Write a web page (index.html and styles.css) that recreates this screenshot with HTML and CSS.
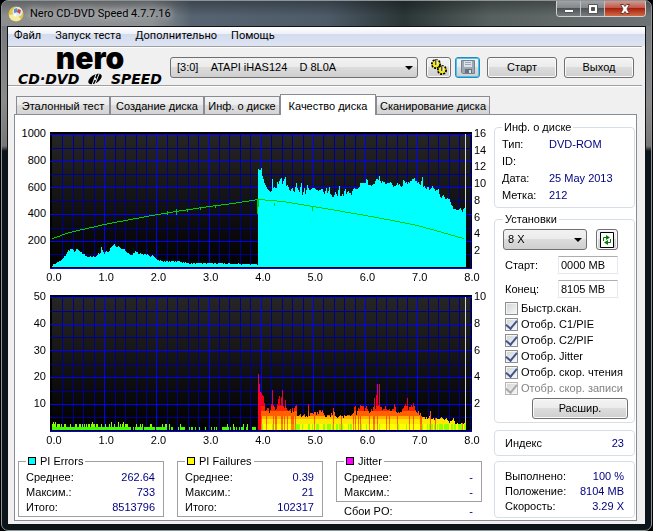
FILE: index.html
```html
<!DOCTYPE html>
<html lang="ru">

<head>
  <meta charset="UTF-8">
  <meta name="viewport" content="width=device-width, initial-scale=1.0">
  <title>Nero CD-DVD Speed 4.7.7.16</title>
  <link rel="stylesheet" href="styles.css">
</head>

<body>
  <div class="window">
    <header class="titlebar">
      <svg class="app-icon" width="16" height="16" viewBox="0 0 16 16">
        <circle cx="8" cy="8" r="7.5" fill="#e2c544" />
        <path d="M1 9a7 7 0 0 0 12 4L8 8z" fill="#f7ec9c" />
        <circle cx="9.5" cy="6" r="5" fill="#dfe8f2" />
        <path d="M6 3l3-1 1 4-4 1z" fill="#5a8fd0" />
        <path d="M10 3l3 1-1 4-3-2z" fill="#d84a30" />
        <circle cx="7" cy="9" r="1.6" fill="#fff" />
      </svg>
      <span class="title">Nero CD-DVD Speed 4.7.7.16</span>
      <div class="window-buttons">
        <button class="win-btn" aria-label="Свернуть">
          <svg width="12" height="10" viewBox="0 0 12 10"><path d="M1.5 5.5h9v3h-9z" fill="#fff" stroke="#555" /></svg>
        </button>
        <button class="win-btn" aria-label="Развернуть">
          <svg width="12" height="10" viewBox="0 0 12 10"><path d="M1.5.5h9v9h-9zM4.5 3.5v3h3v-3z" fill="#fff" fill-rule="evenodd" stroke="#555" /></svg>
        </button>
        <button class="win-btn close" aria-label="Закрыть">
          <svg width="12" height="10" viewBox="0 0 12 10"><path d="M1.5.5h3L6 2.5 7.5.5h3L8 5l2.5 4.500h-3L6 7.500 4.500 9.500h-3L4 5z" fill="#fff" stroke="#6b3a34" /></svg>
        </button>
      </div>
    </header>

    <div class="client">
      <nav class="menu">
        <a href="#file">Файл</a>
        <a href="#run">Запуск теста</a>
        <a href="#extra">Дополнительно</a>
        <a href="#help">Помощь</a>
      </nav>

      <div class="toolbar">
        <div class="logo">
          <span class="logo-nero">nero</span>
          <span class="logo-speed">
            <span>CD·DVD</span>
            <svg width="16" height="12" viewBox="0 0 16 12">
              <ellipse cx="8" cy="6" rx="7.5" ry="4" transform="rotate(-32 8 6)" fill="#000" />
              <path d="M9.5 0L5 12M12 1L8 11" stroke="#f0f0f0" stroke-width="1" />
              <circle cx="8" cy="6" r="1.2" fill="#f0f0f0" />
            </svg>
            <span>SPEED</span>
          </span>
        </div>
        <div class="select drive">
          <select aria-label="Привод">
            <option>[3:0] &nbsp; &nbsp;ATAPI iHAS124 &nbsp; &nbsp;D 8L0A</option>
          </select>
        </div>
        <button class="btn icon-btn" aria-label="Настройки">
          <svg width="18" height="18" viewBox="0 0 18 18">
            <circle cx="6" cy="6" r="4" fill="#f4ec00" stroke="#000" stroke-width="2" stroke-dasharray="2 1" />
            <circle cx="6" cy="6" r="3.2" fill="#f4ec00" />
            <circle cx="12" cy="12" r="4" fill="#f4ec00" stroke="#000" stroke-width="2" stroke-dasharray="2 1" />
            <circle cx="12" cy="12" r="3.2" fill="#f4ec00" />
            <path d="M6 1v6M12 8v5" stroke="#555" stroke-width="2" />
            <path d="M7 2v5M13 8v5" stroke="#fff" stroke-width="1" />
          </svg>
        </button>
        <button class="btn icon-btn save" aria-label="Сохранить">
          <svg width="14" height="14" viewBox="0 0 14 14">
            <path d="M.5.5h13v13h-12l-1-1z" fill="#9ba7b2" stroke="#74828f" />
            <path d="M3 1h8v6H3z" fill="#dbe1e6" />
            <path d="M4 2.5h6M4 4.5h6" stroke="#9ba7b2" />
            <path d="M4 9h7v4H4z" fill="#65717d" />
            <path d="M8 10h2v3H8z" fill="#dbe1e6" />
          </svg>
        </button>
        <button class="btn command">Старт</button>
        <button class="btn command">Выход</button>
      </div>

      <div class="tabs">
        <button class="tab tab-wide">Эталонный тест</button>
        <button class="tab tab-wide">Создание диска</button>
        <button class="tab tab-info">Инф. о диске</button>
        <button class="tab tab-quality active">Качество диска</button>
        <button class="tab tab-scan">Сканирование диска</button>
      </div>

      <main class="panel">
        <section class="results">
          <div class="chart">
            <div class="axis axis-left"><span>1000</span><span>800</span><span>600</span><span>400</span><span>200</span></div>
            <canvas id="pieChart"></canvas>
            <div class="axis axis-right speed"><span>16</span><span>14</span><span>12</span><span>10</span><span>8</span><span>6</span><span>4</span><span>2</span></div>
            <div class="axis-x"><span>0.0</span><span>1.0</span><span>2.0</span><span>3.0</span><span>4.0</span><span>5.0</span><span>6.0</span><span>7.0</span><span>8.0</span></div>
          </div>
          <div class="chart">
            <div class="axis axis-left"><span>50</span><span>40</span><span>30</span><span>20</span><span>10</span></div>
            <canvas id="pifChart"></canvas>
            <div class="axis axis-right"><span>10</span><span>8</span><span>6</span><span>4</span><span>2</span></div>
            <div class="axis-x"><span>0.0</span><span>1.0</span><span>2.0</span><span>3.0</span><span>4.0</span><span>5.0</span><span>6.0</span><span>7.0</span><span>8.0</span></div>
          </div>

          <div class="stats">
            <fieldset class="stat">
              <legend><i class="swatch cyan"></i>PI Errors</legend>
              <div class="row"><span>Среднее:</span><b>262.64</b></div>
              <div class="row"><span>Максим.:</span><b>733</b></div>
              <div class="row"><span>Итого:</span><b>8513796</b></div>
            </fieldset>
            <fieldset class="stat">
              <legend><i class="swatch yellow"></i>PI Failures</legend>
              <div class="row"><span>Среднее:</span><b>0.39</b></div>
              <div class="row"><span>Максим.:</span><b>21</b></div>
              <div class="row"><span>Итого:</span><b>102317</b></div>
            </fieldset>
            <div class="jitter">
              <fieldset class="stat">
                <legend><i class="swatch magenta"></i>Jitter</legend>
                <div class="row"><span>Среднее:</span><b>-</b></div>
                <div class="row"><span>Максим.:</span><b>-</b></div>
              </fieldset>
              <div class="row po"><span>Сбои PO:</span><b>-</b></div>
            </div>
          </div>
        </section>

        <aside class="sidebar">
          <fieldset class="group disc-info">
            <legend>Инф. о диске</legend>
            <dl>
              <dt>Тип:</dt><dd>DVD-ROM</dd>
              <dt>ID:</dt><dd></dd>
              <dt>Дата:</dt><dd>25 May 2013</dd>
              <dt>Метка:</dt><dd>212</dd>
            </dl>
          </fieldset>

          <fieldset class="group settings">
            <legend>Установки</legend>
            <div class="speed-row">
              <div class="select">
                <select aria-label="Скорость">
                  <option>8 X</option>
                </select>
              </div>
              <button class="btn refresh" aria-label="Обновить">
                <svg width="14" height="16" viewBox="0 0 14 16">
                  <path d="M.5.5h13v15H.5z" fill="#fff" stroke="#000" />
                  <path d="M3.5 9V5.500H6M10.500 7v3.500H8" fill="none" stroke="#087a08" />
                  <path d="M6 3l4 2.500L6 8zM8 8l-4 2.500L8 13z" fill="#087a08" />
                </svg>
              </button>
            </div>
            <div class="field">
              <label for="start">Старт:</label>
              <input id="start" type="text" value="0000 MB">
            </div>
            <div class="field">
              <label for="end">Конец:</label>
              <input id="end" type="text" value="8105 MB">
            </div>
            <div class="checks">
              <label><input type="checkbox">Быстр.скан.</label>
              <label><input type="checkbox" checked>Отобр. C1/PIE</label>
              <label><input type="checkbox" checked>Отобр. C2/PIF</label>
              <label><input type="checkbox" checked>Отобр. Jitter</label>
              <label><input type="checkbox" checked>Отобр. скор. чтения</label>
              <label class="disabled"><input type="checkbox" checked disabled>Отобр. скор. записи</label>
            </div>
            <button class="btn advanced">Расшир.</button>
          </fieldset>

          <div class="group index">
            <div class="row"><span>Индекс</span><b>23</b></div>
          </div>

          <div class="group progress">
            <div class="row"><span>Выполнено:</span><b>100 %</b></div>
            <div class="row"><span>Положение:</span><b>8104 MB</b></div>
            <div class="row"><span>Скорость:</span><b>3.29 X</b></div>
          </div>
        </aside>
      </main>
    </div>
  </div>
  <script src="charts.js"></script>
</body>

</html>
```

FILE: styles.css
```css
* {
  box-sizing: border-box;
}

body {
  margin: 0;
  padding: 0 1px 1px;
  background-color: #000;
  font-family: 'Liberation Sans', Arial, sans-serif;
  font-size: 11px;
  line-height: 15px;
  color: #000;
}

button,
input,
select {
  font: inherit;
  color: inherit;
}

.window {
  padding: 0 5px 5px;
  border: 1px solid #8d9498;
  border-radius: 7px;
  background: linear-gradient(#70757a 0, #8b8b8b 100px, #777 145px, #0c1519 150px, #0c1519 100%);
}

/* title bar */
.titlebar {
  display: flex;
  align-items: center;
  height: 25px;
  margin: 0 -5px;
  padding: 0 5px 0 6px;
  border-radius: 6px 6px 0 0;
  background: linear-gradient(rgba(0, 0, 0, 0.3), rgba(0, 0, 0, 0) 60%),
    linear-gradient(90deg, #8b8d8f 0, #8d9194 150px, #566370 190px, #4d5b68 50%, #2b3637 62%, #56605e 75%, #6d7275 100%);
}

.title {
  flex: 1;
  margin-left: 6px;
  font-family: Roboto, sans-serif;
  text-shadow: 0 0 6px #ccc, 0 0 8px #ccc;
}

.window-buttons {
  display: flex;
  align-self: flex-start;
  border: 1px solid #d0d0d0;
  border-top: none;
  border-radius: 0 0 4px 4px;
  overflow: hidden;
}

.win-btn {
  display: flex;
  align-items: center;
  justify-content: center;
  width: 24px;
  height: 15px;
  padding: 0;
  border: none;
  border-right: 1px solid #c0c0c0;
  background: linear-gradient(#a0a2a4, #84888b 45%, #4c5256 50%, #777c80);
}

.win-btn.close {
  width: 40px;
  border-right: none;
  background: linear-gradient(#d09a90, #c0584a 45%, #a8200c 50%, #d06a45);
}

/* client area */
.client {
  border: 1px solid #111;
  background-color: #f0f0f0;
  padding-bottom: 3px;
}

.menu {
  display: flex;
  gap: 14px;
  height: 19px;
  padding-left: 6px;
  line-height: 18px;
  font-family: Roboto, sans-serif;
  background: linear-gradient(#fff, #eef1f9 35%, #d4dbed 36%, #dde4f3);
}

.menu a {
  color: #000;
  text-decoration: none;
}

.toolbar {
  display: flex;
  align-items: center;
  height: 40px;
  margin-right: 3px;
  padding: 2px 8px 0 10px;
  border-top: 1px solid #a0a0a0;
  border-bottom: 1px solid #a0a0a0;
  box-shadow: inset 0 1px #fff, 0 1px #fff;
}

.logo {
  display: flex;
  flex-direction: column;
  align-items: center;
  width: 144px;
  margin-right: 8px;
}

.logo-nero {
  font-family: Inter, sans-serif;
  font-size: 30px;
  font-weight: 900;
  line-height: 18px;
}

.logo-speed {
  display: flex;
  align-items: center;
  justify-content: space-between;
  width: 100%;
  margin-top: 6px;
  font-family: 'DejaVu Sans', sans-serif;
  font-size: 14px;
  font-style: italic;
  font-weight: bold;
  line-height: 12px;
}

.btn {
  height: 21px;
  padding: 0;
  border: 1px solid #707070;
  border-radius: 3px;
  background: linear-gradient(#f4f4f4, #ebebeb 49%, #dcdcdc 50%, #cfcfcf);
  box-shadow: inset 0 0 0 1px #fafafa;
}

.icon-btn {
  display: flex;
  align-items: center;
  justify-content: center;
  width: 25px;
  margin-left: 8px;
}

.icon-btn.save {
  margin-left: 4px;
  border-color: #2c8ab5;
  box-shadow: inset 0 0 0 1px #3fc4f5;
}

.command {
  width: 70px;
  margin-left: 7px;
}

.select {
  position: relative;
}

.select select {
  display: block;
  width: 100%;
  height: 21px;
  padding: 0 20px 0 6px;
  appearance: none;
  border: 1px solid #707070;
  border-radius: 3px;
  background: linear-gradient(#f2f2f2, #ebebeb 49%, #dcdcdc 50%, #cfcfcf);
}

.select::after {
  content: '';
  position: absolute;
  top: 9px;
  right: 5px;
  border: 4px solid transparent;
  border-top-color: #000;
  border-bottom: none;
}

.drive {
  flex: 1;
}

/* tabs */
.tabs {
  display: flex;
  align-items: flex-end;
  height: 21px;
  margin: 8px 8px 0;
  position: relative;
}

.tab {
  height: 18px;
  margin-bottom: 1px;
  padding: 2px 0 0;
  border: 1px solid #898c95;
  border-bottom: none;
  background: linear-gradient(#f3f3f3, #ebebeb 49%, #dddddd 50%, #d4d4d4);
  white-space: nowrap;
}

.tab-wide {
  width: 94px;
}

.tab-info {
  width: 76px;
}

.tab-quality {
  width: 96px;
}

.tab-scan {
  width: 114px;
}

.tab.active {
  height: 21px;
  margin-bottom: 0;
  background: #fff;
}

.panel {
  display: flex;
  margin: -1px 8px 0 6px;
  border: 1px solid #898c95;
  background-color: #fff;
}

.results {
  flex: 1;
  min-width: 0;
  padding-top: 17px;
}

/* charts */
.chart {
  display: grid;
  grid-template-columns: 35px 1fr 22px;
  margin-bottom: 10px;
}

.chart canvas {
  display: block;
  width: 100%;
  height: 137px;
}

.axis {
  display: flex;
  flex-direction: column;
  justify-content: space-between;
  margin: -5px 0 23px;
  line-height: 12px;
}

.axis-left {
  padding-right: 4px;
  text-align: right;
}

.axis-right {
  padding-left: 2px;
}

.axis-right.speed {
  margin-bottom: 13px;
}

.axis-x {
  grid-column: 1 / -1;
  display: flex;
  justify-content: space-between;
  margin: 1px 12px 0 29px;
  line-height: 15px;
}

.axis-x span {
  width: 20px;
  text-align: center;
}

/* statistics */
.stats {
  display: grid;
  grid-template-columns: repeat(3, 1fr);
  align-items: start;
  gap: 13px;
  margin: -4px 12px 0 3px;
}

fieldset {
  min-width: 0;
  margin: 0;
}

legend {
  padding: 0 2px;
}

.stat {
  padding: 1px 8px 1px 7px;
  border: 1px solid #a0a0a0;
}

.swatch {
  display: inline-block;
  width: 8px;
  height: 8px;
  margin-right: 4px;
  border: 1px solid #000;
}

.cyan {
  background-color: #0ff;
}

.yellow {
  background-color: #ff0;
}

.magenta {
  background-color: #f0f;
}

.row {
  display: flex;
  justify-content: space-between;
}

.row b {
  font-weight: normal;
  color: #000080;
}

.po {
  padding: 2px 9px 0 8px;
}

/* sidebar */
.sidebar {
  width: 142px;
  padding: 4px 1px 2px 0;
}

.group {
  border: 1px solid #d5dfe5;
  border-radius: 4px;
}

.disc-info {
  height: 89px;
  padding: 0 7px;
}

.disc-info dl {
  display: grid;
  grid-template-columns: 47px 1fr;
  grid-auto-rows: 17px;
  margin: 2px 0 0;
}

.disc-info dd {
  margin: 0;
  color: #000080;
}

.settings {
  margin-top: 3px;
  padding: 2px 6px 3px 8px;
}

.disc-info legend,
.settings legend {
  line-height: 16px;
}

.speed-row {
  display: flex;
  gap: 9px;
}

.speed-row .select {
  width: 84px;
}

.speed-row select {
  padding-left: 4px;
}

.refresh {
  display: flex;
  align-items: center;
  justify-content: center;
  width: 22px;
}

.field {
  display: flex;
  align-items: center;
  justify-content: space-between;
  margin: 6px 10px 0 2px;
}

.field input {
  width: 60px;
  height: 18px;
  padding: 0 2px;
  border: 1px solid #e3e9ef;
  border-top-color: #abadb3;
}

.checks {
  margin: 2px 0 2px 2px;
}

.checks label {
  display: flex;
  align-items: center;
  gap: 3px;
  height: 16px;
  white-space: nowrap;
}

.checks input {
  display: grid;
  place-items: center;
  width: 13px;
  height: 13px;
  margin: 0;
  appearance: none;
  border: 1px solid #8e8f8f;
  background: linear-gradient(135deg, #d0d4d8, #f6f6f6);
  box-shadow: inset 0 0 0 1px #f4f4f4;
}

.checks input:checked::before {
  content: '';
  width: 5px;
  height: 9px;
  border: solid #3f548f;
  border-width: 0 2px 2px 0;
  transform: translateY(-1px) rotate(40deg);
}

.checks .disabled {
  color: #838383;
}

.checks input:disabled {
  border-color: #b8b8b8;
}

.checks input:disabled::before {
  border-color: #a8a8a8;
}

.advanced {
  display: block;
  width: 96px;
  margin-left: auto;
}

.index {
  margin-top: 7px;
  padding: 5px 10px 4px;
}

.progress {
  margin-top: 5px;
  padding: 7px 10px 3px;
}
```

FILE: charts.js
```js
// Both plots are laid out on a 422 x 137 grid, the zero point is at (2, 135)
const PLOT_WIDTH = 422;
const PLOT_HEIGHT = 137;
const BASE = 135;
const STEP_X = 52.2;
const LAYER_BREAK = 206;

// [column, height] pairs
const pieErrors = [
    [0, 1], [3, 3], [8, 5], [11, 8], [14, 12], [16, 16], [19, 17], [22, 15], [25, 17], [28, 14], [31, 12],
    [35, 10], [40, 9], [44, 10], [46, 13], [48, 13], [49, 20], [50, 16], [52, 12], [54, 15], [56, 14],
    [58, 18], [60, 21], [62, 22], [64, 19], [66, 20], [69, 17], [72, 17], [74, 14], [78, 12], [80, 11],
    [82, 14], [84, 15], [86, 13], [92, 12], [95, 12], [98, 9], [100, 11], [103, 9], [105, 7], [109, 5],
    [125, 5], [135, 3], [158, 3], [205, 2],
    [206, 97], [208, 96], [209, 97], [210, 92], [212, 85], [214, 81], [216, 76], [217, 74], [219, 77],
    [220, 88], [221, 78], [222, 80], [224, 77], [225, 85], [226, 82], [228, 88], [229, 89], [230, 84],
    [231, 86], [233, 88], [234, 82], [236, 79], [238, 76], [240, 79], [242, 75], [244, 83], [246, 75],
    [247, 76], [249, 84], [250, 73], [252, 79], [253, 74], [255, 80], [257, 76], [262, 78], [266, 76],
    [270, 77], [272, 72], [274, 77], [275, 72], [277, 80], [278, 71], [280, 70], [283, 73], [285, 70],
    [287, 80], [288, 71], [291, 72], [293, 77], [294, 72], [296, 75], [299, 71], [301, 78], [306, 78],
    [308, 82], [310, 84], [312, 82], [314, 88], [316, 83], [321, 81], [323, 86], [326, 87], [327, 92],
    [328, 85], [333, 84], [336, 82], [338, 84], [341, 79], [344, 83], [347, 82], [350, 80], [351, 86],
    [354, 83], [359, 85], [361, 89], [363, 85], [366, 83], [368, 81], [370, 88], [371, 80], [376, 78],
    [380, 79], [382, 76], [386, 78], [387, 72], [389, 69], [391, 72], [393, 69], [397, 67], [399, 61],
    [401, 58], [403, 56], [405, 55], [408, 58], [410, 56], [412, 58]
];

// envelope of the PI failures after the layer break
const pifFailures = [
    [206, 56], [207, 46], [208, 38], [211, 34], [213, 24], [218, 22], [219, 30], [220, 40], [221, 28], [223, 23],
    [227, 34], [228, 26], [230, 40], [231, 26], [233, 30], [234, 22], [241, 22], [244, 26], [245, 17],
    [255, 16], [256, 27], [257, 17], [270, 21], [272, 15], [279, 17], [281, 22], [284, 15], [300, 17],
    [303, 29], [304, 19], [310, 29], [312, 20], [314, 28], [316, 20], [321, 24], [322, 32], [323, 24],
    [325, 46], [326, 26], [327, 46], [328, 26], [335, 24], [338, 20], [341, 25], [343, 28], [345, 18],
    [350, 25], [352, 24], [355, 32], [356, 24], [361, 29], [363, 22], [366, 20], [370, 15], [376, 13],
    [378, 22], [379, 12], [388, 14], [394, 12], [397, 8], [401, 12], [403, 7], [412, 8]
];

const readSpeed = [
    [0, 28], [17, 34], [52, 42], [78, 47], [105, 52], [130, 56], [157, 60], [180, 63], [206, 67],
    [230, 65], [260, 60], [290, 55], [313, 51], [340, 46], [365, 41], [390, 34], [411, 28]
];

let seed = 7;

function random() {
    seed = (seed * 16807) % 2147483647;
    return seed / 2147483647;
}

function valueAt(points, x) {
    for (let i = 1; i < points.length; i++) {
        const [x0, y0] = points[i - 1];
        const [x1, y1] = points[i];
        if (x <= x1) {
            return y0 + (y1 - y0) * (x - x0) / (x1 - x0);
        }
    }
    return points[points.length - 1][1];
}

function setup(id) {
    const canvas = document.getElementById(id);
    canvas.width = canvas.clientWidth;
    canvas.height = PLOT_HEIGHT;
    return canvas.getContext('2d');
}

// keeps the edges on whole pixels when the plot is stretched
function bar(ctx, x, y, width, height, color) {
    const scale = ctx.canvas.width / PLOT_WIDTH;
    const left = Math.round(x * scale);
    const right = Math.round((x + width) * scale);
    ctx.fillStyle = color;
    ctx.fillRect(left, y, Math.max(1, right - left), height);
}

function drawGrid(ctx) {
    const shade = ctx.createLinearGradient(0, 0, 0, PLOT_HEIGHT);
    shade.addColorStop(0, '#262626');
    shade.addColorStop(1, '#000');
    bar(ctx, 0, 0, PLOT_WIDTH, PLOT_HEIGHT, '#000');
    bar(ctx, 2, 2, PLOT_WIDTH - 4, BASE - 2, shade);

    for (let i = 1; i <= 40; i++) {
        bar(ctx, Math.round(2 + i * STEP_X / 5), 2, 1, BASE - 2, '#000090');
    }
    for (let i = 0; i < 5; i++) {
        bar(ctx, 0, Math.round(15.5 + i * 26.7), PLOT_WIDTH, 1, '#000090');
    }
    for (let i = 1; i < 8; i++) {
        bar(ctx, Math.round(2 + i * STEP_X), 2, 1, BASE - 2, '#0000ff');
    }
    for (let i = 0; i <= 5; i++) {
        bar(ctx, 0, Math.round(2 + i * 26.7), PLOT_WIDTH, 1, '#0000ff');
    }
    bar(ctx, 415, 2, 1, BASE - 2, '#d8d8d8');
}

function drawPie() {
    const ctx = setup('pieChart');
    drawGrid(ctx);

    for (let x = 0; x < 414; x++) {
        const noise = x < LAYER_BREAK ? random() * 1.5 : random() * 3 - 1;
        const height = Math.round(valueAt(pieErrors, x) + noise);
        bar(ctx, x + 2, BASE - height, 1, height, '#00ffff');
    }

    for (let x = 0; x < 412; x++) {
        bar(ctx, x + 2, BASE - Math.round(valueAt(readSpeed, x)) - 1, 1, 1, '#00d000');
    }
    // short drops of the reading speed
    [[115, 54, 4], [124, 54, 6], [135, 57, 3], [148, 59, 3], [163, 61, 3], [222, 63, 3], [260, 58, 4]].forEach(([x, y, h]) => {
        bar(ctx, x + 2, BASE - y - h + 2, 1, h, '#00d000');
    });
    bar(ctx, LAYER_BREAK + 1, BASE - 67, 1, 14, '#00d000');
    bar(ctx, LAYER_BREAK + 2, BASE - 67, 1, 7, '#00d000');
}

function drawBand(ctx, x, from, to, color) {
    if (to > from) {
        bar(ctx, x, BASE - to, 1, to - from, color);
    }
}

function drawPif() {
    const ctx = setup('pifChart');
    drawGrid(ctx);

    for (let x = 0; x < LAYER_BREAK; x++) {
        const density = x < 75 ? 0.99 : x < 115 ? 0.85 : 0.42;
        if (random() > density) continue;
        const high = random() < (x < 75 ? 0.5 : 0.15);
        drawBand(ctx, x + 2, 0, 3, '#40ff00');
        if (high) drawBand(ctx, x + 2, 3, 6, '#80ff00');
        if (high && random() < 0.08) drawBand(ctx, x + 2, 6, 8, '#b8f000');
    }

    for (let x = LAYER_BREAK; x < 414; x++) {
        const peak = valueAt(pifFailures, x);
        const top = Math.round(peak > 30 ? peak : peak * (0.78 + random() * 0.22));
        const px = x + 2;
        if (x < 209) {
            drawBand(ctx, px, 0, top, '#ff0020');
            drawBand(ctx, px, 38, top, '#e00060');
            continue;
        }
        const hot = random() < (peak > 20 ? 0.3 : 0.06);
        const cold = random() < (x > 375 ? 0.75 : x > 240 && x < 300 ? 0.5 : 0.15);
        drawBand(ctx, px, 24, top, top > 35 ? '#e00050' : '#f00010');
        drawBand(ctx, px, 19, Math.min(top, 24), '#ff2000');
        drawBand(ctx, px, 14, Math.min(top, 19), '#ff6000');
        drawBand(ctx, px, 11, Math.min(top, 14), hot ? '#ff5000' : '#ffb000');
        drawBand(ctx, px, 6, Math.min(top, 11), hot ? '#ff6000' : '#ffe800');
        drawBand(ctx, px, 0, Math.min(top, 6), hot ? '#ff8000' : cold ? '#90ff00' : '#ffff00');
    }
}

drawPie();
drawPif();
```
